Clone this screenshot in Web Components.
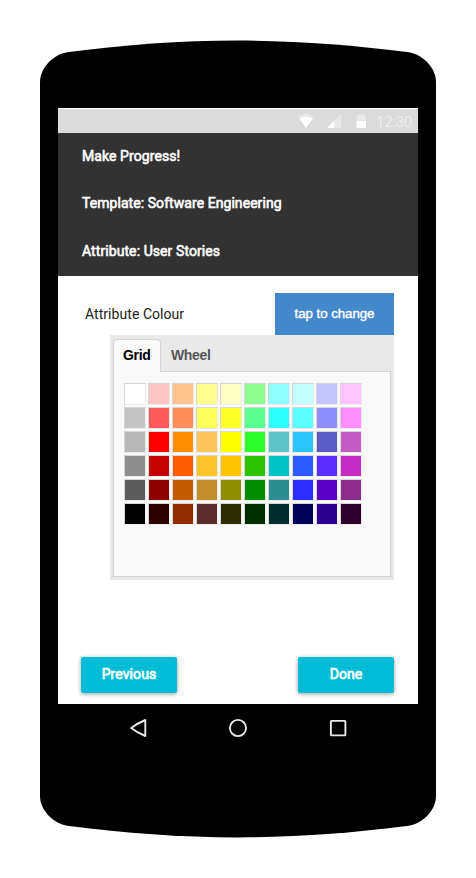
<!DOCTYPE html>
<html lang="en">
<head>
<meta charset="utf-8">
<title>Make Progress!</title>
<style>
body { margin: 0; background: #fff; font-family: Roboto, "Noto Sans", sans-serif; }
</style>
</head>
<body>
<phone-frame>
  <status-bar time="12:30"></status-bar>
  <app-header>
    <header-line>Make Progress!</header-line>
    <header-line style="--ls:.06px">Template: Software Engineering</header-line>
    <header-line>Attribute: User Stories</header-line>
  </app-header>
  <setting-row label="Attribute Colour">tap to change</setting-row>
  <colour-picker></colour-picker>
  <action-bar>
    <raised-button>Previous</raised-button>
    <raised-button>Done</raised-button>
  </action-bar>
</phone-frame>
<script>
class Base extends HTMLElement {
  connectedCallback() {
    if (!this.shadowRoot) this.attachShadow({ mode: 'open' }).innerHTML = this.render();
  }
}
customElements.define('phone-frame', class extends Base {
  render() {
    return `<style>
      :host { display: grid; width: 476px; height: 878px; }
      .body, .inside { grid-area: 1 / 1; }
      .body { display: block; }
      .inside { padding: 108px 58px 0; display: flex; flex-direction: column; }
      .screen { background: #fff; height: 595px; padding-top: 1px; display: flex; flex-direction: column; }
    </style>
    <svg class="body" width="476" height="878" viewBox="0 0 476 878">
      <path d="M40 82C40 68 53 54 69 52C125 45 180 40.6 238 40.6S351 45 407 52C423 54 436 68 436 82V796C436 810 423 824 407 826C351 833 296 837.4 238 837.4S125 833 69 826C53 824 40 810 40 796Z"/>
    </svg>
    <div class="inside"><div class="screen"><slot></slot></div><nav-bar></nav-bar></div>`;
  }
});
customElements.define('status-bar', class extends Base {
  render() {
    return `<style>
      :host { display: flex; box-sizing: border-box; height: 24px; background: #dbdbdb; justify-content: flex-end; padding-right: 6px; color: #f5f5f5; }
      span { font: 300 15px/26px Roboto, sans-serif; letter-spacing: -.1px; margin-left: 7px; }
    </style>
    <svg width="72" height="24" viewBox="297 109 72 24">
      <path fill="#e9e9e9" d="M297.8 116.8Q306 110.6 314.2 116.8L306 127.8Z"/>
      <path fill="#fff" d="M299.5 119Q306 114.4 312.5 119L306 127.8Z"/>
      <path fill="#e9e9e9" d="M327 128L341 114V128Z"/>
      <path fill="#fff" d="M327 128L334 121V128Z"/>
      <path fill="#e9e9e9" d="M356.5 121V116Q356.5 115 357.5 115H358.8V113.8H363.7V115H365Q366 115 366 116V121Z"/>
      <path fill="#fff" d="M356.5 121H366V127Q366 128 365 128H357.5Q356.5 128 356.5 127Z"/>
    </svg><span>${this.getAttribute('time')}</span>`;
  }
});
customElements.define('app-header', class extends Base {
  render() {
    return `<style>
      :host { display: flex; flex-direction: column; box-sizing: border-box; height: 143px; background: #323232; padding: 0 24px; color: #fff; }
    </style><slot></slot>`;
  }
});
customElements.define('header-line', class extends Base {
  render() {
    return `<style>
      :host { display: block; height: 47.4px; font: 400 14px/46px Roboto, sans-serif; letter-spacing: var(--ls, .08px); -webkit-text-stroke: .6px #fff; white-space: nowrap; }
    </style><slot></slot>`;
  }
});
customElements.define('setting-row', class extends Base {
  render() {
    return `<style>
      :host { display: flex; justify-content: space-between; margin: 17px 24px 0 27px; height: 42px; line-height: 42px; }
      .label { font-size: 14px; color: #212121; white-space: nowrap; letter-spacing: .05px; }
      .button { width: 119px; background: #48c; color: #fff; text-align: center; font: 400 13.3px/42px "Liberation Sans", sans-serif; letter-spacing: -.06px; -webkit-text-stroke: .4px #fff; }
    </style><div class="label">${this.getAttribute('label')}</div><div class="button"><slot></slot></div>`;
  }
});
customElements.define('colour-swatch', class extends Base {
  render() {
    return `<style>
      :host { display: block; box-sizing: border-box; width: 22px; height: 22px; border: 1px solid; border-color: #d6d6d6 #ececec #ececec #d6d6d6; background: ${this.getAttribute('colour')}; }
    </style>`;
  }
});
customElements.define('colour-picker', class extends Base {
  render() {
    const rows = [
      'ffffff ffc4c4 ffc48e ffff8e ffffc4 8eff8e 8effff c4ffff c4c4ff ffc4ff',
      'c4c4c4 ff5b5b ff8e5b ffff5b ffff2c 5bff8e 2cffff 5bffff 8e8eff ff8eff',
      'b8b8b8 ff0000 ff8e00 ffc45b ffff00 2cff2c 5bc4c4 2cc4ff 5b5bc4 c45bc4',
      '8e8e8e c40000 ff5b00 ffc42c ffc400 2cc400 00c4c4 2c5bff 5b2cff c42cc4',
      '5b5b5b 8e0000 c45b00 c48e2c 8e8e00 008e00 2c8e8e 2c2cff 5b00c4 8e2c8e',
      '000000 2c0000 8e2c00 5b2c2c 2c2c00 002c00 002c2c 00005b 2c008e 2c002c'
    ];
    return `<style>
      :host { display: flex; flex-direction: column; box-sizing: border-box; width: 284px; height: 245px; margin-left: 52px; background: #e9e9e9; padding: 4px 3px 3px; }
      .tabs { display: flex; height: 32px; font: 700 14px/33px "Liberation Sans", sans-serif; letter-spacing: -.35px; }
      .tab { color: #555; padding-left: 10px; }
      .tab.on { color: #000; box-sizing: border-box; width: 48px; height: 33px; line-height: 31px; padding-left: 9px; border: 1px solid #d3d3d3; border-bottom: 0; border-radius: 4px 4px 0 0; background: #f9f9f9; z-index: 1; }
      .panel { flex: 1; border: 1px solid #d3d3d3; background: #f9f9f9; padding: 11px 10px; }
      .grid { display: grid; grid-template-columns: repeat(10, 22px); gap: 2px; }
    </style>
    <div class="tabs"><div class="tab on">Grid</div><div class="tab">Wheel</div></div>
    <div class="panel"><div class="grid">${rows.join(' ').split(' ').map(c => `<colour-swatch colour="#${c}"></colour-swatch>`).join('')}</div></div>`;
  }
});
customElements.define('action-bar', class extends Base {
  render() {
    return `<style>
      :host { display: flex; justify-content: space-between; margin: 77px 24px 0 23px; }
    </style><slot></slot>`;
  }
});
customElements.define('raised-button', class extends Base {
  render() {
    return `<style>
      :host { display: block; width: 96px; height: 36px; border-radius: 2px; background: #00bcd7; color: #fff; text-align: center; font: 400 14px/34px Roboto, sans-serif; letter-spacing: .1px; -webkit-text-stroke: .7px #fff; box-shadow: 0 1px 4px rgba(0,0,0,.4); }
    </style><slot></slot>`;
  }
});
customElements.define('nav-bar', class extends Base {
  render() {
    return `<style>
      :host { display: flex; justify-content: center; gap: 80px; padding-top: 14px; }
      svg { display: block; fill: none; stroke: #e8e8e8; stroke-width: 1.9; stroke-linejoin: round; }
    </style>
    <svg width="20" height="20"><path d="M17.3 2V18Q9 14.5 3.2 10Q9 5.5 17.3 2Z"/></svg>
    <svg width="20" height="20"><circle cx="10" cy="10" r="8.1"/></svg>
    <svg width="20" height="20"><rect x="2.9" y="2.9" width="14.5" height="14.5" rx=".6"/></svg>`;
  }
});
</script>
</body>
</html>
